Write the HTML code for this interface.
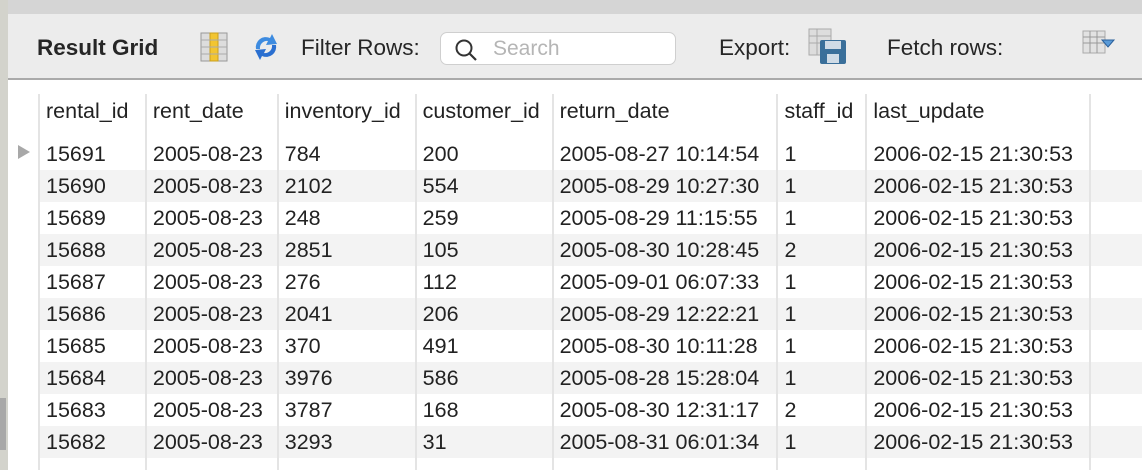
<!DOCTYPE html>
<html><head><style>
*{margin:0;padding:0;box-sizing:border-box}
html,body{width:1142px;height:470px;overflow:hidden}
body{background:#fff;font-family:"Liberation Sans",Helvetica,sans-serif;color:#222;position:relative}
.top{position:absolute;left:0;top:0;width:1142px;height:14px;background:#d5d5d5}
.left{position:absolute;left:0;top:0;width:8px;height:470px;background:#d3d3cc}
.sb{position:absolute;left:0;top:398px;width:6px;height:52px;background:#a8a8a8}
.tb{position:absolute;left:8px;top:14px;width:1134px;height:66px;background:#ececec;border-bottom:2px solid #aaa}
.tb span{position:absolute;top:21px;font-size:22.5px;color:#262626}
.search{position:absolute;left:432px;top:18px;width:236px;height:33px;background:#fff;border:1px solid #cfcfcf;border-radius:7px}
.grid{position:absolute;left:8px;top:82px;width:1134px;height:388px;background:#fff;overflow:hidden}
table{position:absolute;left:30px;top:12px;border-collapse:collapse;font-size:21.5px;table-layout:fixed}
td{height:32px;padding:0 0 0 6px;border-left:2px solid #e4e4e4;white-space:nowrap;vertical-align:middle;overflow:hidden}
tr.h td{height:34px}
tr.sp td{height:10px}
tr.g td{background:#f3f3f3}
.arrow{position:absolute;left:10px;top:63px;width:0;height:0;border-left:12px solid #a8a8a8;border-top:7px solid transparent;border-bottom:7px solid transparent}
</style></head><body>
<div class="top"></div>
<div class="tb">
<span style="left:29px;font-weight:bold">Result Grid</span>
<svg style="position:absolute;left:192px;top:18px" width="28" height="30"><rect x="1" y="1" width="26" height="28" fill="#ddd" stroke="#999"/><rect x="10" y="1" width="8" height="28" fill="#f2c531" stroke="#c9a020"/><g stroke="#aaa"><line x1="1" y1="8" x2="27" y2="8"/><line x1="1" y1="15" x2="27" y2="15"/><line x1="1" y1="22" x2="27" y2="22"/></g></svg>
<svg style="position:absolute;left:242px;top:17px" width="32" height="32"><path d="M6 18 A10 10 0 0 1 20 7 L22 3 L27 13 L16 14 L18 10 A7 7 0 0 0 10 18 Z" fill="#3d8be0"/><path d="M26 14 A10 10 0 0 1 12 25 L10 29 L5 19 L16 18 L14 22 A7 7 0 0 0 22 14 Z" fill="#2a6fd0"/></svg>
<span style="left:293px">Filter Rows:</span>
<div class="search"><svg style="position:absolute;left:13px;top:5px" width="24" height="24"><circle cx="10" cy="10" r="7.5" fill="none" stroke="#333" stroke-width="2"/><line x1="15.5" y1="15.5" x2="22" y2="22" stroke="#333" stroke-width="2.2"/></svg><span style="left:52px;top:4px;color:#b5b5b5;font-size:21px">Search</span></div>
<span style="left:711px">Export:</span>
<svg style="position:absolute;left:800px;top:14px" width="40" height="36"><g fill="#ddd" stroke="#aaa"><rect x="1" y="1" width="22" height="26"/></g><g stroke="#aaa"><line x1="1" y1="8" x2="23" y2="8"/><line x1="1" y1="15" x2="23" y2="15"/><line x1="9" y1="1" x2="9" y2="27"/></g><rect x="12" y="12" width="26" height="24" rx="2" fill="#3a6f9a"/><rect x="17" y="13" width="16" height="8" fill="#cfdbe6"/><rect x="19" y="26" width="12" height="9" fill="#cfdbe6"/></svg>
<span style="left:879px">Fetch rows:</span>
<svg style="position:absolute;left:1074px;top:16px" width="34" height="26"><rect x="1" y="1" width="22" height="22" fill="#e2e2e2" stroke="#aaa"/><g stroke="#999"><line x1="1" y1="7" x2="23" y2="7"/><line x1="1" y1="13" x2="23" y2="13"/><line x1="8" y1="1" x2="8" y2="23"/><line x1="15" y1="1" x2="15" y2="23"/></g><path d="M20 10 L32 10 L26 17 Z" fill="#5a9bd8" stroke="#2a5f9a"/></svg>
</div>
<div class="grid">
<div class="arrow"></div>
<table>
<colgroup><col style="width:107px"><col style="width:132px"><col style="width:138px"><col style="width:137px"><col style="width:225px"><col style="width:89px"><col style="width:224px"><col style="width:52px"></colgroup>
<tr class="h"><td>rental_id</td><td>rent_date</td><td>inventory_id</td><td>customer_id</td><td>return_date</td><td>staff_id</td><td>last_update</td><td></td></tr>
<tr class="sp"><td></td><td></td><td></td><td></td><td></td><td></td><td></td><td></td></tr>
<tr><td>15691</td><td>2005-08-23</td><td>784</td><td>200</td><td>2005-08-27 10:14:54</td><td>1</td><td>2006-02-15 21:30:53</td><td></td></tr>
<tr class="g"><td>15690</td><td>2005-08-23</td><td>2102</td><td>554</td><td>2005-08-29 10:27:30</td><td>1</td><td>2006-02-15 21:30:53</td><td></td></tr>
<tr><td>15689</td><td>2005-08-23</td><td>248</td><td>259</td><td>2005-08-29 11:15:55</td><td>1</td><td>2006-02-15 21:30:53</td><td></td></tr>
<tr class="g"><td>15688</td><td>2005-08-23</td><td>2851</td><td>105</td><td>2005-08-30 10:28:45</td><td>2</td><td>2006-02-15 21:30:53</td><td></td></tr>
<tr><td>15687</td><td>2005-08-23</td><td>276</td><td>112</td><td>2005-09-01 06:07:33</td><td>1</td><td>2006-02-15 21:30:53</td><td></td></tr>
<tr class="g"><td>15686</td><td>2005-08-23</td><td>2041</td><td>206</td><td>2005-08-29 12:22:21</td><td>1</td><td>2006-02-15 21:30:53</td><td></td></tr>
<tr><td>15685</td><td>2005-08-23</td><td>370</td><td>491</td><td>2005-08-30 10:11:28</td><td>1</td><td>2006-02-15 21:30:53</td><td></td></tr>
<tr class="g"><td>15684</td><td>2005-08-23</td><td>3976</td><td>586</td><td>2005-08-28 15:28:04</td><td>1</td><td>2006-02-15 21:30:53</td><td></td></tr>
<tr><td>15683</td><td>2005-08-23</td><td>3787</td><td>168</td><td>2005-08-30 12:31:17</td><td>2</td><td>2006-02-15 21:30:53</td><td></td></tr>
<tr class="g"><td>15682</td><td>2005-08-23</td><td>3293</td><td>31</td><td>2005-08-31 06:01:34</td><td>1</td><td>2006-02-15 21:30:53</td><td></td></tr>
<tr><td></td><td></td><td></td><td></td><td></td><td></td><td></td><td></td></tr>
</table>
</div>
<div class="left"></div>
<div class="sb"></div>
</body></html>
